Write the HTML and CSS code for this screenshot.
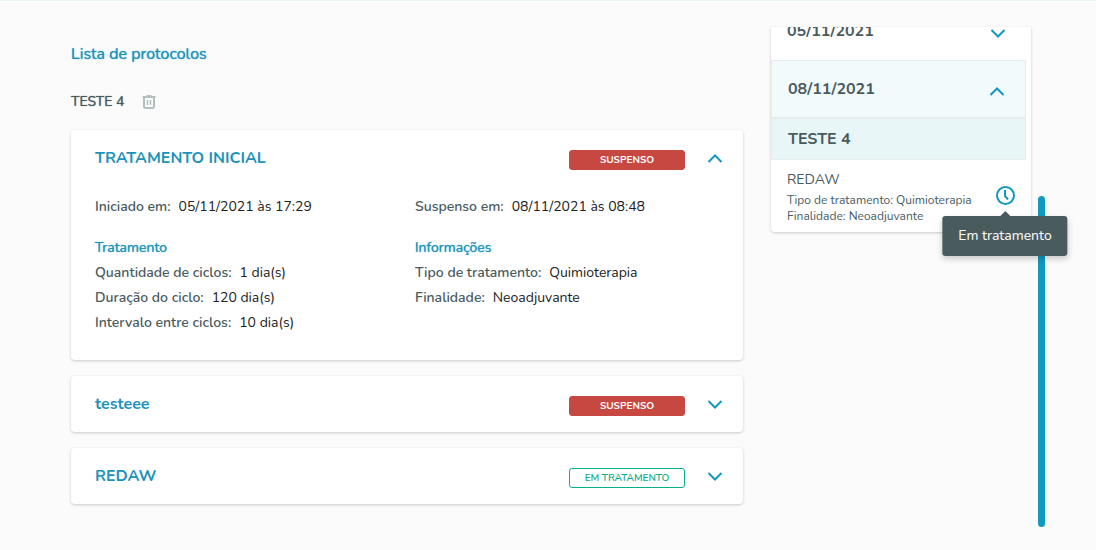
FILE: index.html
```html
<!DOCTYPE html>
<html lang="pt-BR">
<head>
    <meta charset="UTF-8">
    <meta name="viewport" content="width=device-width, initial-scale=1.0">
    <title>Lista de protocolos</title>
    <link rel="stylesheet" href="styles.css">
</head>
<body>
    <div class="page">
        <main class="protocols">
            <h1 class="page-title">Lista de protocolos</h1>

            <div class="group-header">
                <h2 class="group-name">TESTE 4</h2>
                <button class="icon-button" type="button" aria-label="Excluir protocolo">
                    <svg width="14" height="14" viewBox="0 0 14 14" fill="none" stroke="#b4bfc1">
                        <path d="M0.5 2h13M4.5 1h5" stroke-width="2"/>
                        <path d="M2 3v8.5a1.5 1.5 0 0 0 1.5 1.5h7a1.5 1.5 0 0 0 1.5-1.5V3" stroke-width="2"/>
                        <path d="M5.5 5v5M8.5 5v5" stroke-width="1.5"/>
                    </svg>
                </button>
            </div>

            <section class="card">
                <div class="card-header">
                    <h3 class="card-title">TRATAMENTO INICIAL</h3>
                    <span class="badge badge-suspended">SUSPENSO</span>
                    <button class="icon-button" type="button" aria-label="Recolher" aria-expanded="true">
                        <svg class="chevron" viewBox="0 0 16 9"><path d="M1.5 8L8 1.5 14.5 8"/></svg>
                    </button>
                </div>
                <div class="card-body">
                    <p><b>Iniciado em:</b>05/11/2021 às 17:29</p>
                    <p><b>Suspenso em:</b>08/11/2021 às 08:48</p>
                    <div>
                        <h4>Tratamento</h4>
                        <p><b>Quantidade de ciclos:</b>1 dia(s)</p>
                        <p><b>Duração do ciclo:</b>120 dia(s)</p>
                        <p><b>Intervalo entre ciclos:</b>10 dia(s)</p>
                    </div>
                    <div>
                        <h4>Informações</h4>
                        <p><b>Tipo de tratamento:</b>Quimioterapia</p>
                        <p><b>Finalidade:</b>Neoadjuvante</p>
                    </div>
                </div>
            </section>

            <section class="card">
                <div class="card-header">
                    <h3 class="card-title">testeee</h3>
                    <span class="badge badge-suspended">SUSPENSO</span>
                    <button class="icon-button" type="button" aria-label="Expandir" aria-expanded="false">
                        <svg class="chevron" viewBox="0 0 16 9"><path d="M1.5 1L8 7.5 14.5 1"/></svg>
                    </button>
                </div>
            </section>

            <section class="card">
                <div class="card-header">
                    <h3 class="card-title">REDAW</h3>
                    <span class="badge badge-active">EM TRATAMENTO</span>
                    <button class="icon-button" type="button" aria-label="Expandir" aria-expanded="false">
                        <svg class="chevron" viewBox="0 0 16 9"><path d="M1.5 1L8 7.5 14.5 1"/></svg>
                    </button>
                </div>
            </section>
        </main>

        <aside class="history">
            <div class="day-clip">
                <button class="day" type="button" aria-expanded="false">
                    05/11/2021
                    <svg class="chevron" viewBox="0 0 16 9"><path d="M1.5 1L8 7.5 14.5 1"/></svg>
                </button>
            </div>
            <button class="day day-open" type="button" aria-expanded="true">
                08/11/2021
                <svg class="chevron" viewBox="0 0 16 9"><path d="M1.5 8L8 1.5 14.5 8"/></svg>
            </button>
            <h3 class="history-group">TESTE 4</h3>
            <div class="history-item">
                <div>
                    <h4>REDAW</h4>
                    <p>Tipo de tratamento: Quimioterapia</p>
                    <p>Finalidade: Neoadjuvante</p>
                </div>
                <div class="status">
                    <button class="icon-button" type="button" aria-label="Em tratamento" aria-describedby="status-tip">
                        <svg width="20" height="20" viewBox="0 0 20 20" fill="none" stroke="#1497bd" stroke-width="2">
                            <circle cx="10.5" cy="10.5" r="8.5"/>
                            <path d="M10 5v6l3 3.5"/>
                        </svg>
                    </button>
                    <div class="tooltip" id="status-tip" role="tooltip">Em tratamento</div>
                </div>
            </div>
        </aside>

        <div class="scroll-thumb"></div>
    </div>
</body>
</html>
```
FILE: styles.css
```css
* {
    box-sizing: border-box;
}
body {
    margin: 0;
    border-top: 1px solid #e6f6f7;
    background: #fbfbfb;
    color: #222;
    font-family: Nunito, Lato, sans-serif;
    font-size: 14px;
}
h1, h2, h3, h4, p {
    margin: 0;
}
button {
    border: none;
    background: none;
    font-family: inherit;
    cursor: pointer;
}
svg {
    display: block;
}
.page {
    display: grid;
    grid-template-columns: 1fr 260px 14px;
    align-items: start;
    padding: 26px 51px 22px 71px;
}
.protocols {
    display: flex;
    flex-direction: column;
    gap: 16px;
    margin-right: 28px;
    padding-top: 15px;
}
.page-title,
.group-name,
.card-body h4 {
    font-weight: normal;
    text-shadow: 0 0 1px currentColor;
}
.page-title {
    color: #1e93b9;
    font-size: 16px;
    line-height: 24px;
}
.group-header {
    display: flex;
    align-items: center;
    gap: 18px;
    padding-top: 8px;
}
.group-name {
    color: #4a5b5e;
    font-size: 14px;
    line-height: 24px;
}
.icon-button {
    padding: 0;
}
.chevron {
    width: 16px;
    height: 9px;
    fill: none;
    stroke: #1497bd;
    stroke-width: 2;
}

/* protocol cards */
.card {
    border-radius: 4px;
    background: #fff;
    box-shadow: 0 1px 3px rgba(0, 0, 0, 0.2);
}
.card-header {
    display: flex;
    align-items: center;
    height: 56px;
    padding: 0 20px 0 24px;
}
.card-title {
    flex: 1;
    color: #1e93b9;
    font-size: 16px;
    font-weight: bold;
}
.badge {
    width: 116px;
    margin: 4px 22px 0 0;
    border: 1px solid;
    border-radius: 3px;
    font-size: 10px;
    font-weight: bold;
    line-height: 18px;
    text-align: center;
}
.badge-suspended {
    border-color: #c64840;
    background: #c64840;
    color: #fff;
}
.badge-active {
    border-color: #0aae8b;
    color: #0aae8b;
    font-weight: 600;
}
.card-body {
    display: grid;
    grid-template-columns: 1fr 1fr;
    gap: 16px;
    padding: 8px 24px 25px;
    line-height: 25px;
}
.card-body b {
    margin-right: 8px;
    color: #4a5b5e;
    font-weight: 600;
}
.card-body h4 {
    color: #1e93b9;
    font-size: 14px;
}

/* history */
.history {
    border-radius: 0 0 4px 4px;
    background: #fff;
    box-shadow: 0 1px 3px rgba(0, 0, 0, 0.2);
    color: #4a5b5e;
}
.day-clip {
    display: flex;
    align-items: flex-end;
    height: 33px;
    overflow: hidden;
}
.day {
    display: flex;
    flex-shrink: 0;
    align-items: center;
    justify-content: space-between;
    width: calc(100% - 5px);
    height: 58px;
    padding: 0 20px 0 16px;
    color: #4a5b5e;
    font-size: 16px;
    font-weight: bold;
}
.day .chevron {
    margin-top: 4px;
}
.day-open {
    border: 1px solid #e7ecec;
    background: #f2fafc;
}
.history-group {
    margin-right: 5px;
    padding: 0 16px;
    border: 1px solid #e7ecec;
    background: #e8f6f8;
    font-size: 16px;
    font-weight: bold;
    line-height: 40px;
}
.history-item {
    display: flex;
    align-items: center;
    justify-content: space-between;
    padding: 8px 16px;
    font-size: 12px;
    line-height: 16px;
}
.history-item h4 {
    font-size: 14px;
    font-weight: normal;
    line-height: 24px;
}
.status {
    position: relative;
    padding-top: 2px;
}
.tooltip {
    position: absolute;
    top: 33px;
    left: 50%;
    padding: 0 16px;
    border-radius: 3px;
    background: #4a5b5e;
    box-shadow: 0 3px 6px rgba(0, 0, 0, 0.2);
    color: #fff;
    font-size: 14px;
    line-height: 40px;
    white-space: nowrap;
    transform: translateX(-50%);
}
.tooltip::before {
    content: "";
    position: absolute;
    bottom: 100%;
    left: 50%;
    margin-left: -5px;
    border: 5px solid transparent;
    border-top: none;
    border-bottom-color: #4a5b5e;
}
.scroll-thumb {
    width: 7px;
    height: 331px;
    margin: 169px 0 0 7px;
    border-radius: 4px;
    background: #0f9bc0;
}
```
